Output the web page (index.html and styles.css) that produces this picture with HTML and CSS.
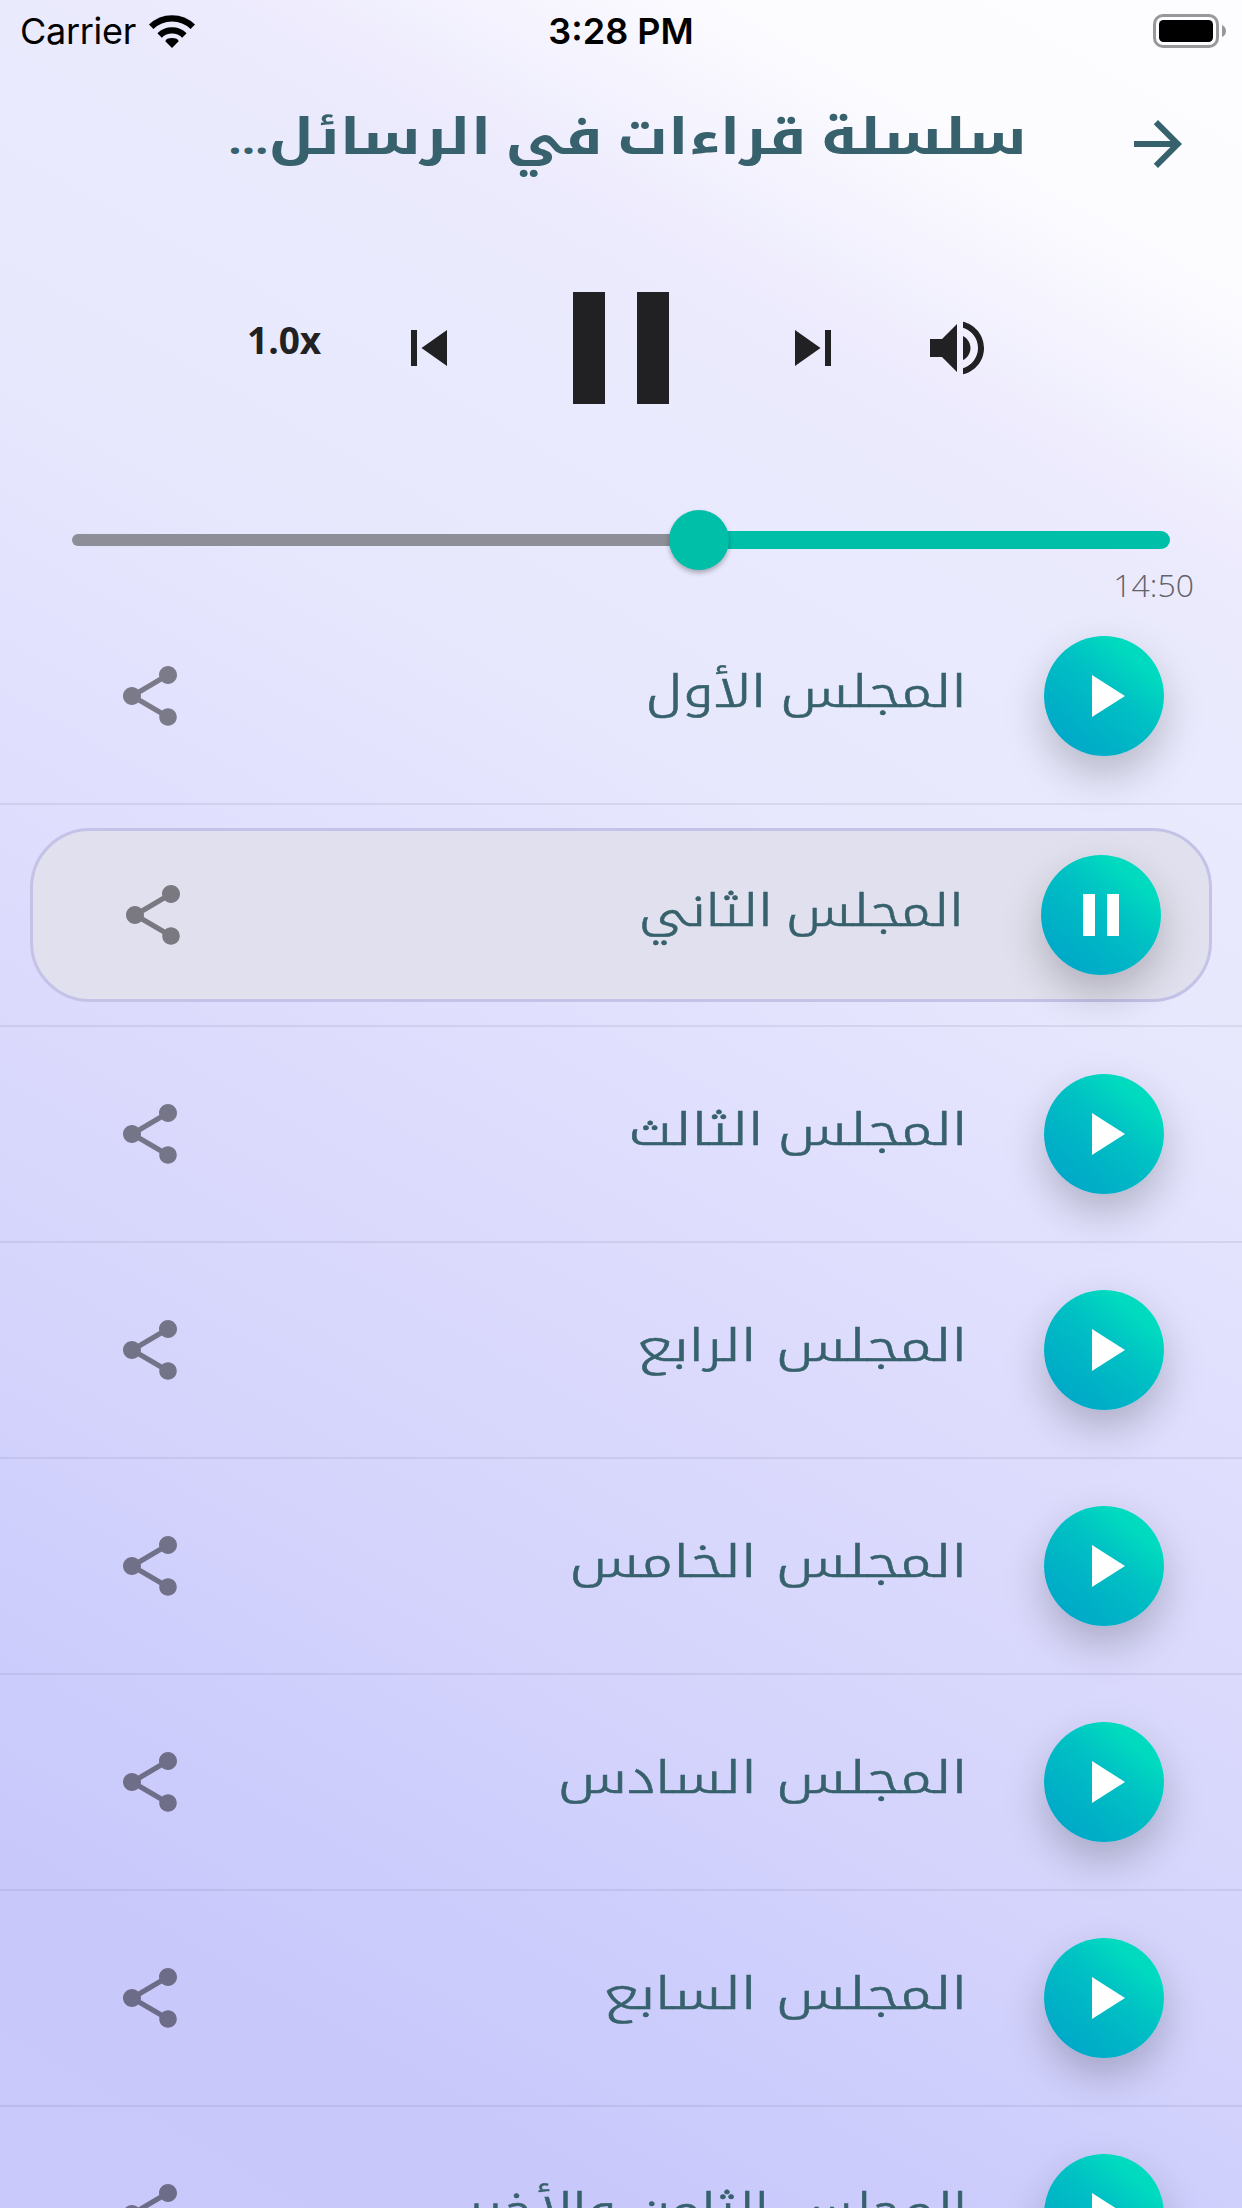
FILE: index.html
```html
<!DOCTYPE html>
<html lang="ar" dir="rtl">
<head>
<meta charset="utf-8">
<title>سلسلة قراءات في الرسائل</title>
<link rel="stylesheet" href="styles.css">
</head>
<body>
<svg class="defs" width="0" height="0" aria-hidden="true">
  <symbol id="play" viewBox="0 0 24 24"><path d="M8 5v14l11-7z"/></symbol>
  <symbol id="pause" viewBox="0 0 24 24"><path d="M6 19h4V5H6v14zm8-14v14h4V5h-4z"/></symbol>
  <symbol id="share" viewBox="0 0 24 24"><path d="M18 16.08c-.76 0-1.44.3-1.96.77L8.91 12.7c.05-.23.09-.46.09-.7s-.04-.47-.09-.7l7.05-4.11c.54.5 1.25.81 2.04.81 1.66 0 3-1.34 3-3s-1.34-3-3-3-3 1.34-3 3c0 .24.04.47.09.7L8.04 9.81C7.5 9.31 6.79 9 6 9c-1.66 0-3 1.34-3 3s1.34 3 3 3c.79 0 1.5-.31 2.04-.81l7.12 4.16c-.05.21-.08.43-.08.65 0 1.61 1.31 2.92 2.92 2.92 1.61 0 2.92-1.31 2.92-2.92s-1.31-2.92-2.92-2.92z"/></symbol>
</svg>
<main class="screen">
  <div class="status" dir="ltr">
    <div class="carrier"><span>Carrier</span>
      <svg class="wifi" viewBox="0 0 46 33"><path d="M23 33l-6.700-6.800q1-3.200 6.700-3.200t6.700 3.200z"/><path d="M10.600 20.400a17.800 17.800 0 0 1 24.800 0" class="wave"/><path d="M2.200 11.800a29.800 29.800 0 0 1 41.600 0" class="wave"/></svg>
    </div>
    <div class="clock">3:28 PM</div>
    <svg class="battery" viewBox="0 0 74 34"><rect x="1.5" y="1.5" width="63" height="31" rx="8.5" class="shell"/><rect x="6" y="6" width="54" height="22" rx="4.5"/><path class="nub" d="M69 11q4 2 4 6t-4 6z"/></svg>
  </div>
  <header class="header">
    <svg class="icon back" viewBox="0 0 24 24"><path d="M12 4l-1.410 1.410L16.170 11H4v2h12.170l-5.580 5.590L12 20l8-8z"/></svg>
    <h1 class="title"><span class="fit">سلسلة قراءات في الرسائل<span class="dots">...</span></span></h1>
  </header>
  <section class="controls" dir="ltr">
    <span class="speed">1.0x</span>
    <svg class="icon" viewBox="0 0 24 24"><path d="M6 6h2v12H6zm3.500 6l8.500 6V6z"/></svg>
    <svg class="icon big"><use href="#pause"/></svg>
    <svg class="icon" viewBox="0 0 24 24"><path d="M6 18l8.500-6L6 6v12zM16 6v12h2V6h-2z"/></svg>
    <svg class="icon volume" viewBox="0 0 24 24"><path d="M3 9v6h4l5 5V4L7 9H3zm13.500 3c0-1.770-1.020-3.290-2.500-4.030v8.050c1.480-.73 2.500-2.250 2.500-4.020zM14 3.230v2.060c2.890.86 5 3.540 5 6.710s-2.110 5.850-5 6.710v2.060c4.010-.91 7-4.490 7-8.770s-2.990-7.860-7-8.770z"/></svg>
  </section>
  <section class="progress">
    <div class="slider"><div class="played"></div><div class="thumb"></div><div class="rest"></div></div>
    <div class="time"><span>14:50</span></div>
  </section>
  <ul class="tracks">
    <li class="track"><div class="line"><button class="disc"><svg class="icon"><use href="#play"/></svg></button><span class="name">المجلس الأول</span><svg class="icon share"><use href="#share"/></svg></div></li>
    <li class="track active"><div class="line"><button class="disc"><svg class="icon"><use href="#pause"/></svg></button><span class="name">المجلس الثاني</span><svg class="icon share"><use href="#share"/></svg></div></li>
    <li class="track"><div class="line"><button class="disc"><svg class="icon"><use href="#play"/></svg></button><span class="name">المجلس الثالث</span><svg class="icon share"><use href="#share"/></svg></div></li>
    <li class="track"><div class="line"><button class="disc"><svg class="icon"><use href="#play"/></svg></button><span class="name">المجلس الرابع</span><svg class="icon share"><use href="#share"/></svg></div></li>
    <li class="track"><div class="line"><button class="disc"><svg class="icon"><use href="#play"/></svg></button><span class="name">المجلس الخامس</span><svg class="icon share"><use href="#share"/></svg></div></li>
    <li class="track"><div class="line"><button class="disc"><svg class="icon"><use href="#play"/></svg></button><span class="name">المجلس السادس</span><svg class="icon share"><use href="#share"/></svg></div></li>
    <li class="track"><div class="line"><button class="disc"><svg class="icon"><use href="#play"/></svg></button><span class="name">المجلس السابع</span><svg class="icon share"><use href="#share"/></svg></div></li>
    <li class="track"><div class="line"><button class="disc"><svg class="icon"><use href="#play"/></svg></button><span class="name">المجلس الثامن والأخير</span><svg class="icon share"><use href="#share"/></svg></div></li>
  </ul>
</main>
</body>
</html>
```
FILE: styles.css
```css
* { box-sizing: border-box; }
body { margin: 0; }
.defs { display: block; }

.screen {
  width: 1242px;
  height: 2208px;
  overflow: hidden;
  font-family: "Noto Kufi Arabic", "DejaVu Sans", sans-serif;
  background: linear-gradient(209.36deg, #fdfdff 0%, #fcfcff 10%, #eceafd 20%, #e9eafd 27%, #e8e8fd 35%, #e2e2fe 45%, #dddcfd 54%, #d5d5fc 68%, #cfcffd 77%, #c8c8fb 88%, #c9c9fb 100%);
}

.icon { display: block; flex: none; width: 72px; height: 72px; fill: currentColor; }

/* status bar */
.status {
  display: grid;
  grid-template-columns: 1fr auto 1fr;
  align-items: center;
  height: 60px;
  padding: 0 20px;
  font: 36px/62px Inter, sans-serif;
  color: #000;
}
.carrier { display: flex; align-items: center; gap: 13px; letter-spacing: -.3px; }
.wifi { width: 46px; height: 33px; }
.wave { fill: none; stroke: #000; stroke-width: 6.3; }
.clock { font-weight: 600; }
.battery { width: 74px; height: 34px; justify-self: end; margin-right: -5px; }
.shell { fill: none; stroke: #98989a; stroke-width: 3; }
.nub { fill: #98989a; }

/* title bar */
.header { display: flex; align-items: center; height: 168px; padding: 0 48px; color: #37616c; }
.title { flex: 1; margin: 0 95px 9px 170px; font-size: 50px; font-weight: 700; line-height: 80px; }
.fit { display: inline-block; white-space: nowrap; word-spacing: -5px; transform: scaleX(1.18); transform-origin: right center; }
.dots { font-size: 40px; letter-spacing: -6px; }

/* playback controls */
.controls { display: flex; align-items: center; height: 240px; padding-left: 247px; color: #212123; }
.speed { width: 72px; margin-right: 74px; padding-bottom: 16px; font: 700 37px/72px "Open Sans", sans-serif; }
.big { width: 192px; height: 192px; margin: 0 60px; }
.volume { margin-left: 72px; }

/* progress */
.progress { height: 120px; padding-top: 42px; }
.slider { display: flex; align-items: center; height: 60px; padding: 0 72px; }
.played { width: 471px; height: 18px; margin-left: -30px; border-radius: 0 9px 9px 0; background: #00bfa8; }
.rest { flex: 1; height: 12px; margin-right: -30px; border-radius: 6px 0 0 6px; background: #8e8e99; }
.thumb { z-index: 1; flex: none; width: 60px; height: 60px; border-radius: 50%; background: #00bfa8; box-shadow: 0 3px 5px rgba(0,0,0,.28); }
.time { padding-right: 48px; font: 300 32px/30px "Open Sans", sans-serif; color: #62626a; }

/* track list */
.tracks { margin: 0; padding: 0; list-style: none; }
.track { display: flex; align-items: center; height: 216px; padding: 0 78px 0 114px; border-bottom: 2px solid rgba(80,80,110,.1); }
.track:first-child { height: 217px; }
.track.active { height: 222px; padding: 0 30px; }
.line { flex: 1; display: flex; align-items: center; }
.active .line { height: 174px; padding: 0 48px 0 84px; border: 3px solid #c4c2e7; border-radius: 60px; background: #e1e0ee; }
.disc {
  display: flex;
  align-items: center;
  justify-content: center;
  flex: none;
  width: 120px;
  height: 120px;
  padding: 0;
  border: 0;
  border-radius: 50%;
  color: #fff;
  background: linear-gradient(220deg, #00dabf 22%, #00c2c4 43%, #00b4c6 65%, #00a8c8 88%);
  box-shadow: 0 18px 42px rgba(0,0,0,.22);
}
.name {
  margin-inline: 77px auto;
  padding-bottom: 8px;
  font-size: 45px;
  font-weight: 300;
  line-height: 72px;
  white-space: nowrap;
  color: #37616c;
  -webkit-text-stroke: .5px #37616c;
  transform: scaleX(1.29);
  transform-origin: right center;
}
.track:nth-child(-n+3) .name { word-spacing: -4px; }
.track:nth-child(1) .name { transform: scaleX(1.26); }
.track:nth-child(2) .name { transform: scaleX(1.2); }
.track:nth-child(3) .name { transform: scaleX(1.282); }
.track:nth-child(8) .name { transform: scaleX(1.215); }
.share { color: rgba(0,0,0,.46); }
```
